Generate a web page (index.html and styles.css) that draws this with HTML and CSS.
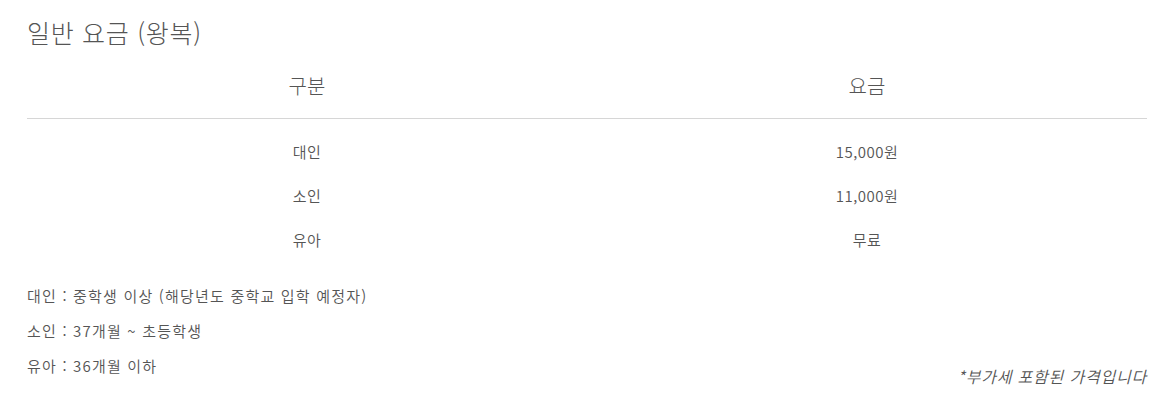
FILE: index.html
```html
<!DOCTYPE html>
<html lang="ko">
<head>
  <meta charset="UTF-8">
  <meta name="viewport" content="width=device-width, initial-scale=1">
  <title>일반 요금 (왕복)</title>
  <link rel="stylesheet" href="styles.css">
</head>
<body>

<div class="요금표">
  <h2 class="제목">일반 요금 (왕복)</h2>

  <table class="표">
    <thead>
      <tr>
        <th>구분</th>
        <th>요금</th>
      </tr>
    </thead>
    <tbody>
      <tr>
        <td>대인</td>
        <td>15,000원</td>
      </tr>
      <tr>
        <td>소인</td>
        <td>11,000원</td>
      </tr>
      <tr>
        <td>유아</td>
        <td>무료</td>
      </tr>
    </tbody>
  </table>

  <div class="안내">
    <ul class="기준">
      <li>대인 : 중학생 이상 (해당년도 중학교 입학 예정자)</li>
      <li>소인 : 37개월 ~ 초등학생</li>
      <li>유아 : 36개월 이하</li>
    </ul>
    <p class="부가세">*부가세 포함된 가격입니다</p>
  </div>
</div>

</body>
</html>
```

FILE: styles.css
```css
body {
  margin: 0;
  font-family: "Noto Sans CJK KR", "Noto Sans", sans-serif;
  font-weight: 350;
  color: #555;
  background-color: #fff;
}

.요금표 {
  padding: 16px 28px 0 27px;
}

.제목 {
  margin: 0;
  font-size: 25px;
  font-weight: 300;
  line-height: 32px;
  letter-spacing: 0.7px;
  color: #555;
}

.표 {
  width: 100%;
  border-collapse: collapse;
  table-layout: fixed;
}

.표 th {
  padding: 24px 0 18px;
  font-size: 20px;
  font-weight: 300;
  line-height: 28px;
  color: #555;
  border-bottom: 1px solid #d6d6d6;
}

.표 td {
  padding: 12px 0;
  font-size: 15px;
  line-height: 20px;
  letter-spacing: 0.5px;
  text-align: center;
}

.표 tbody tr:first-child td {
  padding-top: 23px;
}

.안내 {
  display: flex;
  justify-content: space-between;
  align-items: flex-end;
  margin-top: 24px;
  padding-bottom: 20px;
}

.기준 {
  margin: 0 0 10px;
  padding: 0;
  list-style: none;
}

.기준 li {
  font-size: 15px;
  line-height: 20px;
  letter-spacing: 1.2px;
  margin-bottom: 15px;
}

.기준 li:last-child {
  margin-bottom: 0;
}

.부가세 {
  margin: 0;
  font-size: 16px;
  font-style: italic;
  line-height: 20px;
  letter-spacing: 0.8px;
}
```
